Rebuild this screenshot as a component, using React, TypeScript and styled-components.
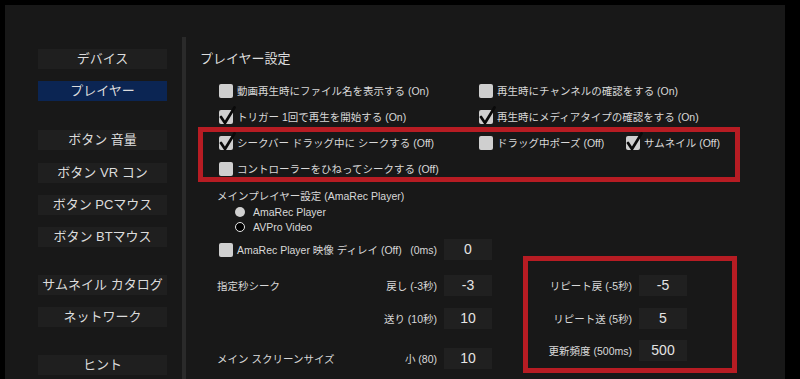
import React from "react";
import styled, { createGlobalStyle } from "styled-components";

const GlobalStyle = createGlobalStyle`
  html, body {
    margin: 0;
    padding: 0;
    background: #000;
    overflow: hidden;
  }
  body {
    font-family: "Liberation Sans", "Noto Sans CJK JP", sans-serif;
    color: #d9d9d9;
  }
`;

const Screen = styled.div`
  width: 800px;
  height: 379px;
  padding: 5px 0 0 5px;
  box-sizing: border-box;
  overflow: hidden;
`;

const Panel = styled.div`
  position: relative;
  display: flex;
  width: 780px;
  height: 420px;
  background: #181818;
`;

const Sidebar = styled.nav`
  display: flex;
  flex-direction: column;
  width: 177px;
  padding: 44px 0 0 33px;
  box-sizing: border-box;
`;

const NavButton = styled.div<{ $active?: boolean; $gap?: number }>`
  display: flex;
  align-items: center;
  justify-content: center;
  width: 129px;
  height: 20px;
  margin-top: ${(p) => p.$gap ?? 0}px;
  background: ${(p) => (p.$active ? "#0b2553" : "#1f1f1f")};
  color: #dcdcdc;
  font-size: 13px;
  line-height: 20px;
  white-space: nowrap;
`;

const Divider = styled.div`
  width: 4px;
  margin-top: 32px;
  background: #2a2a2a;
`;

const Content = styled.main`
  flex: 1;
  padding: 45px 0 0 14px;
  font-size: 10.5px;
`;

const Title = styled.h2`
  margin: 0 0 10px;
  font-size: 13px;
  font-weight: 400;
  line-height: 18px;
  color: #dcdcdc;
`;

const CheckRow = styled.div`
  display: flex;
  align-items: center;
  height: 26px;
  padding-left: 19px;
`;

const CheckItem = styled.label<{ $width?: number }>`
  display: flex;
  align-items: center;
  gap: 4px;
  width: ${(p) => (p.$width ? `${p.$width}px` : "auto")};
  white-space: nowrap;
  line-height: 14px;
`;

const Box = styled.span`
  position: relative;
  flex: none;
  width: 14px;
  height: 14px;
  border-radius: 2px;
  background: #cfcfcf;
`;

const Tick = styled.svg`
  position: absolute;
  left: -1px;
  top: -5px;
  width: 18px;
  height: 20px;
`;

function Checkbox({ checked }: { checked?: boolean }) {
  return (
    <Box>
      {checked && (
        <Tick viewBox="0 0 18 20">
          <path
            d="M3 12 L7 18 L16.5 2.5"
            fill="none"
            stroke="#0a0a0a"
            strokeWidth="2.7"
            strokeLinecap="round"
            strokeLinejoin="round"
          />
        </Tick>
      )}
    </Box>
  );
}

const Lower = styled.div`
  padding: 6px 0 0 17px;
`;

const Caption = styled.div`
  line-height: 16px;
`;

const RadioRow = styled.div`
  display: flex;
  align-items: center;
  gap: 8px;
  height: 15px;
  padding-left: 18px;
`;

const RadioDot = styled.span<{ $on?: boolean }>`
  width: 10px;
  height: 10px;
  box-sizing: border-box;
  border-radius: 50%;
  background: ${(p) => (p.$on ? "#d0d0d0" : "#000")};
  border: ${(p) => (p.$on ? "none" : "1.5px solid #e6e6e6")};
`;

const FieldRow = styled.div<{ $gap?: number; $width: number }>`
  display: grid;
  grid-template-columns: minmax(0, 1fr) auto 48px;
  column-gap: 7px;
  align-items: center;
  width: ${(p) => p.$width}px;
  height: 21px;
  margin-top: ${(p) => p.$gap ?? 0}px;
  white-space: nowrap;
`;

const Left = styled.div`
  display: flex;
  align-items: center;
  gap: 4px;
  padding-left: 2px;
`;

const Unit = styled.span`
  text-align: right;
`;

const Value = styled.div`
  height: 21px;
  background: #202020;
  color: #e4e4e4;
  font-size: 14px;
  line-height: 21px;
  text-align: center;
`;

const SeekArea = styled.div`
  display: flex;
  align-items: flex-start;
`;

const Column = styled.div<{ $offset?: number }>`
  display: flex;
  flex-direction: column;
  margin-left: ${(p) => p.$offset ?? 0}px;
`;

const Highlight = styled.div<{ $x: number; $y: number; $w: number; $h: number }>`
  position: absolute;
  left: ${(p) => p.$x}px;
  top: ${(p) => p.$y}px;
  width: ${(p) => p.$w}px;
  height: ${(p) => p.$h}px;
  box-sizing: border-box;
  border: 5px solid #b71c23;
  pointer-events: none;
`;

const nav = [
  { label: "デバイス", gap: 0 },
  { label: "プレイヤー", gap: 12, active: true },
  { label: "ボタン 音量", gap: 29 },
  { label: "ボタン VR コン", gap: 13 },
  { label: "ボタン PCマウス", gap: 12 },
  { label: "ボタン BTマウス", gap: 12 },
  { label: "サムネイル カタログ", gap: 28 },
  { label: "ネットワーク", gap: 12 },
  { label: "ヒント", gap: 28 },
];

export default function App() {
  return (
    <>
      <GlobalStyle />
      <Screen>
        <Panel>
          <Sidebar>
            {nav.map((n) => (
              <NavButton key={n.label} $active={n.active} $gap={n.gap}>
                {n.label}
              </NavButton>
            ))}
          </Sidebar>
          <Divider />
          <Content>
            <Title>プレイヤー設定</Title>
            <CheckRow>
              <CheckItem $width={260}>
                <Checkbox />
                動画再生時にファイル名を表示する (On)
              </CheckItem>
              <CheckItem>
                <Checkbox />
                再生時にチャンネルの確認をする (On)
              </CheckItem>
            </CheckRow>
            <CheckRow>
              <CheckItem $width={260}>
                <Checkbox checked />
                トリガー 1回で再生を開始する (On)
              </CheckItem>
              <CheckItem>
                <Checkbox checked />
                再生時にメディアタイプの確認をする (On)
              </CheckItem>
            </CheckRow>
            <CheckRow>
              <CheckItem $width={260}>
                <Checkbox checked />
                シークバー ドラッグ中に シークする (Off)
              </CheckItem>
              <CheckItem $width={147}>
                <Checkbox />
                ドラッグ中ポーズ (Off)
              </CheckItem>
              <CheckItem>
                <Checkbox checked />
                サムネイル (Off)
              </CheckItem>
            </CheckRow>
            <CheckRow>
              <CheckItem>
                <Checkbox />
                コントローラーをひねってシークする (Off)
              </CheckItem>
            </CheckRow>

            <Lower>
              <Caption>メインプレイヤー設定 (AmaRec Player)</Caption>
              <RadioRow>
                <RadioDot $on />
                AmaRec Player
              </RadioRow>
              <RadioRow>
                <RadioDot />
                AVPro Video
              </RadioRow>
              <FieldRow $width={275} $gap={5}>
                <Left>
                  <Checkbox />
                  AmaRec Player 映像 ディレイ (Off)
                </Left>
                <Unit>(0ms)</Unit>
                <Value>0</Value>
              </FieldRow>
              <SeekArea>
                <Column>
                  <FieldRow $width={275} $gap={15}>
                    <span>指定秒シーク</span>
                    <Unit>戻し (-3秒)</Unit>
                    <Value>-3</Value>
                  </FieldRow>
                  <FieldRow $width={275} $gap={12}>
                    <span />
                    <Unit>送り (10秒)</Unit>
                    <Value>10</Value>
                  </FieldRow>
                  <FieldRow $width={275} $gap={19}>
                    <span>メイン スクリーンサイズ</span>
                    <Unit>小 (80)</Unit>
                    <Value>10</Value>
                  </FieldRow>
                </Column>
                <Column $offset={39}>
                  <FieldRow $width={156} $gap={15}>
                    <span />
                    <Unit>リピート戻 (-5秒)</Unit>
                    <Value>-5</Value>
                  </FieldRow>
                  <FieldRow $width={156} $gap={12}>
                    <span />
                    <Unit>リピート送 (5秒)</Unit>
                    <Value>5</Value>
                  </FieldRow>
                  <FieldRow $width={156} $gap={11}>
                    <span />
                    <Unit>更新頻度 (500ms)</Unit>
                    <Value>500</Value>
                  </FieldRow>
                </Column>
              </SeekArea>
            </Lower>
          </Content>
          <Highlight $x={193} $y={122} $w={542} $h={55} />
          <Highlight $x={518} $y={251} $w={214} $h={117} />
        </Panel>
      </Screen>
    </>
  );
}
